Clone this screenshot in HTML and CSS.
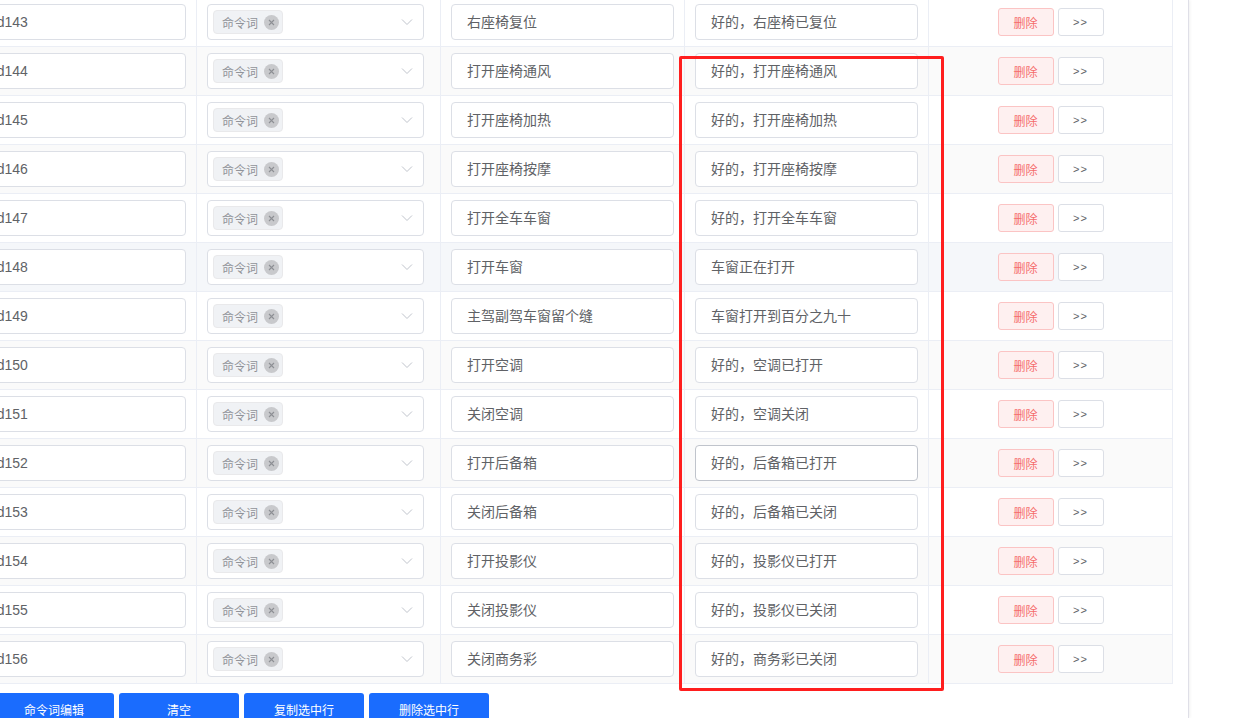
FILE: index.html
```html
<!DOCTYPE html>
<html lang="zh-CN">
<head>
    <meta charset="UTF-8">
    <meta name="viewport" content="width=device-width, initial-scale=1.0">
    <title>命令词配置</title>
    <link rel="stylesheet" href="styles.css">
</head>
<body>
    <div class="page">
        <div class="table-wrap">
            <div class="cmd-table" id="cmdTable"></div>
        </div>

        <div class="toolbar">
            <button class="btn-blue">命令词编辑</button>
            <button class="btn-blue">清空</button>
            <button class="btn-blue">复制选中行</button>
            <button class="btn-blue">删除选中行</button>
        </div>
    </div>

    <!-- annotation box -->
    <div class="mark-box"></div>

    <script>
        const rows = [
            ['cmd143', '右座椅复位', '好的，右座椅已复位'],
            ['cmd144', '打开座椅通风', '好的，打开座椅通风'],
            ['cmd145', '打开座椅加热', '好的，打开座椅加热'],
            ['cmd146', '打开座椅按摩', '好的，打开座椅按摩'],
            ['cmd147', '打开全车车窗', '好的，打开全车车窗'],
            ['cmd148', '打开车窗', '车窗正在打开'],
            ['cmd149', '主驾副驾车窗留个缝', '车窗打开到百分之九十'],
            ['cmd150', '打开空调', '好的，空调已打开'],
            ['cmd151', '关闭空调', '好的，空调关闭'],
            ['cmd152', '打开后备箱', '好的，后备箱已打开'],
            ['cmd153', '关闭后备箱', '好的，后备箱已关闭'],
            ['cmd154', '打开投影仪', '好的，投影仪已打开'],
            ['cmd155', '关闭投影仪', '好的，投影仪已关闭'],
            ['cmd156', '关闭商务彩', '好的，商务彩已关闭']
        ];

        const closeIcon = `<svg viewBox="0 0 15 15" width="15" height="15"><circle cx="7.5" cy="7.5" r="7.5" fill="#c8c9cc"/><path d="M5 5L10 10M10 5L5 10" stroke="#8d8f94" stroke-width="1.1"/></svg>`;
        const arrowIcon = `<svg viewBox="0 0 12 8" width="12" height="8"><path d="M1 1.5L6 6.5L11 1.5" fill="none" stroke="#c0c4cc" stroke-width="1"/></svg>`;

        let html = '';
        rows.forEach((r, i) => {
            let cls = 'row';
            if (i % 2 === 1) cls += ' striped';
            if (r[0] === 'cmd148') cls += ' hover';
            const focus = r[0] === 'cmd152' ? ' focus' : '';
            html += `
                <div class="${cls}">
                    <div class="cell"><div class="input">${r[0]}</div></div>
                    <div class="cell">
                        <div class="select">
                            <span class="tag">命令词<i class="tag-close">${closeIcon}</i></span>
                            <span class="arrow">${arrowIcon}</span>
                        </div>
                    </div>
                    <div class="cell"><div class="input">${r[1]}</div></div>
                    <div class="cell"><div class="input${focus}">${r[2]}</div></div>
                    <div class="cell cell-ops">
                        <button class="btn-del">删除</button>
                        <button class="btn-more">&gt;&gt;</button>
                    </div>
                </div>`;
        });
        document.getElementById('cmdTable').innerHTML = html;
    </script>
</body>
</html>
```

FILE: styles.css
```css
* {
    box-sizing: border-box;
}

body {
    margin: 0;
    width: 1243px;
    height: 718px;
    overflow: hidden;
    background: #fff;
    font-family: 'Liberation Sans', 'Noto Sans CJK SC', sans-serif;
    color: #606266;
}

.page {
    width: 1189px;
    height: 718px;
    overflow: hidden;
    border-right: 1px solid #dfdfe7;
    box-shadow: 1px 0 3px rgba(0, 0, 0, 0.06);
}

/* table is scrolled a bit to the left */
.table-wrap {
    margin-left: -48px;
    margin-top: -2px;
    width: 1221px;
}

.row {
    display: grid;
    grid-template-columns: 245px repeat(4, 244px);
    border-bottom: 1px solid #ebeef5;
    background: #fff;
}

.row.striped {
    background: #fafafa;
}

.row.hover {
    background: #f5f7fa;
}

.cell {
    padding: 6px 10px;
    border-right: 1px solid #ebeef5;
}

.input {
    height: 36px;
    line-height: 34px;
    padding: 0 15px;
    border: 1px solid #dcdfe6;
    border-radius: 4px;
    background: #fff;
    font-size: 14px;
    color: #606266;
    white-space: nowrap;
}

.input.focus {
    border-color: #c0c4cc;
}

.select {
    width: 217px;
    height: 36px;
    border: 1px solid #dcdfe6;
    border-radius: 4px;
    background: #fff;
    display: flex;
    align-items: center;
    padding: 0 10px 0 5px;
}

.tag {
    display: inline-flex;
    align-items: center;
    gap: 6px;
    height: 24px;
    padding: 0 3px 0 8px;
    background: #f0f2f5;
    border: 1px solid #e9e9eb;
    border-radius: 4px;
    font-size: 12px;
    color: #909399;
}

.tag-close {
    display: flex;
    width: 15px;
    height: 15px;
}

.arrow {
    margin-left: auto;
    display: flex;
}

.cell-ops {
    display: flex;
    align-items: center;
    justify-content: center;
    gap: 4px;
}

.btn-del,
.btn-more {
    height: 28px;
    border-radius: 3px;
    font-size: 12px;
    font-family: inherit;
    padding: 0;
    cursor: pointer;
}

.btn-del {
    width: 56px;
    background: #fef0f0;
    border: 1px solid #fbc4c4;
    color: #f56c6c;
}

.btn-more {
    width: 46px;
    background: #fff;
    border: 1px solid #dcdfe6;
    color: #606266;
    font-size: 11px;
    letter-spacing: 1px;
}

.toolbar {
    display: flex;
    gap: 5px;
    margin: 9px 0 0 -6px;
}

.btn-blue {
    width: 120px;
    height: 32px;
    border: none;
    border-radius: 3px;
    background: #1a6cfe;
    color: #fff;
    font-size: 12px;
    font-family: inherit;
    cursor: pointer;
}

.mark-box {
    position: absolute;
    left: 679px;
    top: 56px;
    width: 265px;
    height: 635px;
    border: 3px solid #ff1e1e;
    border-radius: 2px;
}
```
